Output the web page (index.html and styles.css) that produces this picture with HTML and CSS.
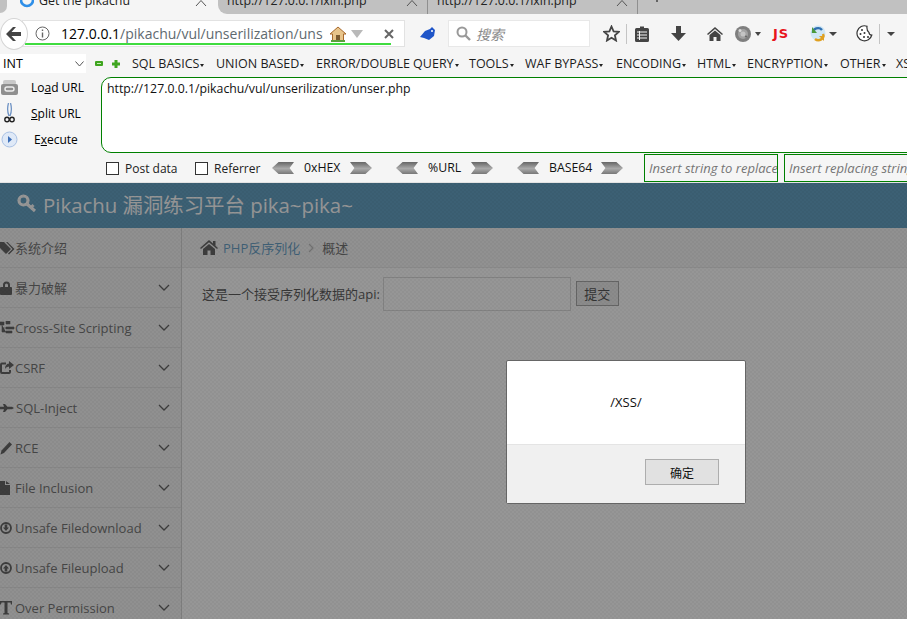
FILE: index.html
```html
<!DOCTYPE html>
<html lang="en">
<head>
    <meta charset="UTF-8">
    <title>Get the pikachu</title>
    <link rel="stylesheet" href="styles.css">
</head>
<body>
    <!-- 标签栏 -->
    <div class="tabs">
        <div class="tab tab-active">
            <svg class="spinner" width="14" height="14" viewBox="0 0 14 14"><path d="M3 1.500 A6 6 0 1 0 11 1.500" fill="none" stroke="#2f8fe8" stroke-width="2.600"/></svg>
            <span class="tab-text">Get the pikachu</span>
            <svg class="tab-close" width="12" height="8" viewBox="0 0 12 8"><path d="M1 7 L6 1.500 L11 7" fill="none" stroke="#555" stroke-width="1"/></svg>
        </div>
        <div class="tab">
            <span class="tab-text">http://127.0.0.1/lxin.php</span>
            <svg class="tab-close" width="12" height="8" viewBox="0 0 12 8"><path d="M1 7 L6 1.500 L11 7" fill="none" stroke="#555" stroke-width="1"/></svg>
        </div>
        <div class="tab">
            <span class="tab-text">http://127.0.0.1/lxin.php</span>
            <svg class="tab-close" width="12" height="8" viewBox="0 0 12 8"><path d="M1 7 L6 1.500 L11 7" fill="none" stroke="#555" stroke-width="1"/></svg>
        </div>
        <svg class="tab-plus" width="14" height="14" viewBox="0 0 14 14"><path d="M7 0 V8 M1 3.500 H13" fill="none" stroke="#444" stroke-width="1.500"/></svg>
    </div>

    <!-- 地址栏 -->
    <div class="navbar">
        <div class="back">
            <svg width="16" height="14" viewBox="0 0 16 14"><path d="M7 0 L0 7 L7 14 H10 L5.500 9 H15 V5 H5.500 L10 0 Z" fill="#444"/></svg>
        </div>
        <div class="urlbar">
            <svg class="info" width="15" height="15" viewBox="0 0 15 15"><circle cx="7.500" cy="7.500" r="6.500" fill="none" stroke="#666"/><path d="M7.500 6.500 V11.500 M7.500 3.500 V5" stroke="#666" stroke-width="1.400"/></svg>
            <div class="url-text"><span class="url-host">127.0.0.1</span>/pikachu/vul/unserilization/unser.php</div>
            <svg class="url-home" width="18" height="16" viewBox="0 0 18 16"><path d="M9 1 L1 8 H3.500 V15 H14.500 V8 H17 Z" fill="#e8c48a" stroke="#a8692c"/><rect x="7" y="9" width="4" height="6" fill="#7a5a30"/><path d="M2 15 H16" stroke="#5aa03c" stroke-width="2"/></svg>
            <svg class="url-arrow" width="12" height="8" viewBox="0 0 12 8"><path d="M0 0 H12 L6 8 Z" fill="#b9b9b9"/></svg>
            <svg class="url-stop" width="10" height="10" viewBox="0 0 10 10"><path d="M1 1 L9 9 M9 1 L1 9" stroke="#666" stroke-width="2"/></svg>
            <div class="url-progress"></div>
        </div>
        <svg class="bird" width="16" height="14" viewBox="0 0 16 14"><path d="M0 10 L5 4 L10 2 L12 0 L15 3 L14 9 L9 13 L4 11 Z" fill="#1f55c8"/><circle cx="12" cy="4" r="1" fill="#fff"/></svg>
        <div class="search">
            <svg width="15" height="15" viewBox="0 0 15 15"><circle cx="6" cy="6" r="4.500" fill="none" stroke="#999" stroke-width="2"/><path d="M9.500 9.500 L14 14" stroke="#999" stroke-width="2.400"/></svg>
            <span>搜索</span>
        </div>
        <svg class="tool tool-star" width="17" height="17" viewBox="0 0 17 17"><path d="M8.500 1.500 L10.600 6.300 L15.800 6.800 L11.900 10.300 L13 15.500 L8.500 12.800 L4 15.500 L5.100 10.300 L1.200 6.800 L6.400 6.300 Z" fill="none" stroke="#444" stroke-width="1.800"/></svg>
        <i class="tool-line"></i>
        <svg class="tool tool-clip" width="14" height="16" viewBox="0 0 14 16"><path d="M1.500 2 H5 V0.500 H9 V2 H12.500 Q14 2 14 3.500 V14.500 Q14 16 12.500 16 H1.500 Q0 16 0 14.500 V3.500 Q0 2 1.500 2 Z" fill="#444"/><path d="M2 6 H12 M2 9 H12 M2 12 H12 M4.500 5 V14" stroke="#f5f5f5" stroke-width="1"/></svg>
        <svg class="tool tool-down" width="15" height="15" viewBox="0 0 15 15"><path d="M5 0 H10 V7 H15 L7.500 15 L0 7 H5 Z" fill="#444"/></svg>
        <svg class="tool tool-home" width="16" height="14" viewBox="0 0 16 14"><path d="M8 0 L16 7 L15 8 L8 2 L1 8 L0 7 Z M2.500 8 L8 3.500 L13.500 8 V14 H9.500 V10 H6.500 V14 H2.500 Z" fill="#444"/></svg>
        <svg class="tool tool-globe" width="16" height="16" viewBox="0 0 16 16"><circle cx="8" cy="8" r="8" fill="#7f7f7f"/><circle cx="8" cy="8" r="5" fill="#a2a2a2"/><circle cx="8" cy="8" r="2.500" fill="#c4c4c4"/><circle cx="5" cy="4.500" r="1.500" fill="#dcdcdc"/><circle cx="11" cy="10.500" r="1" fill="#666"/></svg>
        <i class="caret caret-globe"></i>
        <span class="tool-js">JS</span>
        <svg class="tool tool-swap" width="16" height="18" viewBox="0 0 16 18"><circle cx="8" cy="8" r="7.500" fill="#cfe6f5"/><path d="M3 8 A5 4.500 0 0 1 12 5" fill="none" stroke="#2f6fb0" stroke-width="2.400"/><path d="M13 9 A5 4.500 0 0 1 5 14" fill="none" stroke="#e0a020" stroke-width="2.400"/><path d="M2 2 V8 H7 Z" fill="#4a9a3c"/><path d="M14 16 V11 H9 Z" fill="#e0a020"/></svg>
        <i class="caret caret-swap"></i>
        <svg class="tool tool-cookie" width="17" height="17" viewBox="0 0 17 17"><path d="M11 1.200 A7.500 7.500 0 1 0 15.800 10 Q13 10 13 7.500 Q10.500 6 11 1.200 Z" fill="#fff" stroke="#333" stroke-width="1.200"/><circle cx="6" cy="5" r="1" fill="#333"/><circle cx="4.500" cy="9" r="1" fill="#333"/><circle cx="8.500" cy="8" r="1" fill="#333"/><circle cx="8" cy="12" r="1" fill="#333"/><circle cx="12" cy="12" r="1" fill="#333"/></svg>
        <i class="tool-line tool-line2"></i>
        <i class="caret caret-last"></i>
    </div>

    <!-- hackbar -->
    <div class="hackbar">
        <div class="hack-menu">
            <div class="int-select">INT
                <svg width="9" height="6" viewBox="0 0 9 6"><path d="M0.500 0.500 L4.500 5 L8.500 0.500" fill="none" stroke="#555"/></svg>
            </div>
            <svg class="minus" width="8" height="5" viewBox="0 0 8 5"><rect width="8" height="5" rx="1" fill="#3fa51f"/><rect x="2" y="2" width="4" height="1" fill="#c8eeb8"/></svg>
            <svg class="plus" width="8" height="8" viewBox="0 0 8 8"><path d="M2.500 0 H5.500 V2.500 H8 V5.500 H5.500 V8 H2.500 V5.500 H0 V2.500 H2.500 Z" fill="#3fa51f"/></svg>
            <ul class="hack-list">
                <li class="m1">SQL BASICS</li>
                <li class="m2">UNION BASED</li>
                <li class="m3">ERROR/DOUBLE QUERY</li>
                <li class="m4">TOOLS</li>
                <li class="m5">WAF BYPASS</li>
                <li class="m6">ENCODING</li>
                <li class="m7">HTML</li>
                <li class="m8">ENCRYPTION</li>
                <li class="m9">OTHER</li>
                <li class="m10">XSS</li>
            </ul>
        </div>
        <div class="hack-main">
            <div class="hack-side">
                <div class="hack-btn">
                    <svg width="17" height="15" viewBox="0 0 17 15"><rect x="2" y="0" width="13" height="5" rx="2" fill="#c9c9c9"/><rect x="0" y="4" width="17" height="11" rx="2" fill="#8f8f8f"/><rect x="4" y="7" width="9" height="4" rx="2" fill="none" stroke="#eee" stroke-width="1.400"/></svg>
                    <span class="load">Lo<u>a</u>d URL</span>
                </div>
                <div class="hack-btn">
                    <svg width="17" height="21" viewBox="0 0 17 21"><path d="M7.500 0 Q5.500 7 8 13 M9.500 0 Q11.500 7 9 13" stroke="#6f93c4" stroke-width="1.300" fill="none"/><circle cx="6" cy="16.500" r="2.200" fill="none" stroke="#222" stroke-width="1.400"/><circle cx="11" cy="16.500" r="2.200" fill="none" stroke="#222" stroke-width="1.400"/></svg>
                    <span class="split"><u>S</u>plit URL</span>
                </div>
                <div class="hack-btn">
                    <svg width="17" height="17" viewBox="0 0 17 17"><circle cx="8.500" cy="8.500" r="7.500" fill="#dfe9f7" stroke="#a9c1e4"/><path d="M7 5 L11 8.500 L7 12 Z" fill="#3d6fb8"/></svg>
                    <span class="exec">E<u>x</u>ecute</span>
                </div>
            </div>
            <div class="hack-right">
                <textarea class="hack-url" spellcheck="false">http://127.0.0.1/pikachu/vul/unserilization/unser.php</textarea>
                <div class="hack-opts">
                    <label class="opt opt-post"><input type="checkbox">Post data</label>
                    <label class="opt opt-ref"><input type="checkbox">Referrer</label>
                    <i class="arr arr-l"></i><span class="enc enc-hex">0xHEX</span><i class="arr arr-r"></i>
                    <i class="arr arr-l arr-gap"></i><span class="enc enc-url">%URL</span><i class="arr arr-r"></i>
                    <i class="arr arr-l arr-gap"></i><span class="enc enc-b64">BASE64</span><i class="arr arr-r"></i>
                    <input class="replace replace1" placeholder="Insert string to replace">
                    <input class="replace replace2" placeholder="Insert replacing string">
                </div>
            </div>
        </div>
    </div>

    <!-- 页面 -->
    <div class="page">
        <div class="header">
            <svg width="20" height="20" viewBox="0 0 20 20"><circle cx="6.500" cy="6.500" r="4.500" fill="none" stroke="#fff" stroke-width="3.200"/><path d="M10 10 L18 17 M14 13.500 L16.500 11" stroke="#fff" stroke-width="3"/></svg>
            <span>Pikachu 漏洞练习平台 pika~pika~</span>
        </div>
        <div class="main">
            <ul class="sidebar">
                <li>
                    <svg width="15" height="14" viewBox="0 0 15 14"><path d="M-2 1 H4 L11 8 L6 13 L-2 5 Z M6 1 H7.500 L14.500 8 L9 13.500 L8 12.500 L12.500 8 Z" fill="#454545"/></svg>
                    <span>系统介绍</span>
                </li>
                <li>
                    <svg width="15" height="14" viewBox="0 0 15 14"><path d="M3 6 V4 A3.500 3.500 0 0 1 10 4 V6 H8 V4 A1.500 1.500 0 0 0 5 4 V6 Z" fill="#454545"/><rect x="0" y="6" width="12" height="8" rx="1" fill="#454545"/></svg>
                    <span>暴力破解</span><svg class="chev" width="12" height="7" viewBox="0 0 12 7"><path d="M1 1 L6 6 L11 1" fill="none" stroke="#454545" stroke-width="1.300"/></svg>
                </li>
                <li>
                    <svg width="15" height="14" viewBox="0 0 15 14"><path d="M6 0 H10 V3 H6 Z M0 1 H4 V4 H0 Z M2 4 V11 H6 M2 7 H6 M6 6 H14 V8 H6 Z M6 10 H12 V12 H6 Z" fill="#454545" stroke="#454545" stroke-width="0.600"/></svg>
                    <span>Cross-Site Scripting</span><svg class="chev" width="12" height="7" viewBox="0 0 12 7"><path d="M1 1 L6 6 L11 1" fill="none" stroke="#454545" stroke-width="1.300"/></svg>
                </li>
                <li>
                    <svg width="15" height="14" viewBox="0 0 15 14"><path d="M6 2.500 H2 Q1 2.500 1 3.500 V11 Q1 12 2 12 H9 Q10 12 10 11 V9" fill="none" stroke="#454545" stroke-width="2"/><path d="M9 0 L14 4 L9 8 V5.500 Q6 5.500 5 8 Q5 3 9 2.500 Z" fill="#454545"/></svg>
                    <span>CSRF</span><svg class="chev" width="12" height="7" viewBox="0 0 12 7"><path d="M1 1 L6 6 L11 1" fill="none" stroke="#454545" stroke-width="1.300"/></svg>
                </li>
                <li class="li-sql">
                    <svg width="14" height="14" viewBox="0 0 14 14"><path d="M0 5.800 H4 L3 3 H5 L7.500 5.800 H12 L14 7 L12 8.200 H7.500 L5 11 H3 L4 8.200 H0 Z" fill="#454545"/></svg>
                    <span>SQL-Inject</span><svg class="chev" width="12" height="7" viewBox="0 0 12 7"><path d="M1 1 L6 6 L11 1" fill="none" stroke="#454545" stroke-width="1.300"/></svg>
                </li>
                <li>
                    <svg width="15" height="14" viewBox="0 0 15 14"><path d="M9.500 1 L12 3.500 L4 12 L0.500 13.500 L1.500 9.500 Z" fill="#454545"/></svg>
                    <span>RCE</span><svg class="chev" width="12" height="7" viewBox="0 0 12 7"><path d="M1 1 L6 6 L11 1" fill="none" stroke="#454545" stroke-width="1.300"/></svg>
                </li>
                <li>
                    <svg width="15" height="14" viewBox="0 0 15 14"><path d="M0 0 H5 V4 H10 V14 H0 Z M6 0 L10 3 H6 Z" fill="#454545"/></svg>
                    <span>File Inclusion</span><svg class="chev" width="12" height="7" viewBox="0 0 12 7"><path d="M1 1 L6 6 L11 1" fill="none" stroke="#454545" stroke-width="1.300"/></svg>
                </li>
                <li>
                    <svg width="15" height="14" viewBox="0 0 15 14"><circle cx="6" cy="7" r="5" fill="none" stroke="#454545" stroke-width="1.800"/><path d="M4.700 3.500 H7.300 V6.500 H9 L6 10 L3 6.500 H4.700 Z" fill="#454545"/></svg>
                    <span>Unsafe Filedownload</span><svg class="chev" width="12" height="7" viewBox="0 0 12 7"><path d="M1 1 L6 6 L11 1" fill="none" stroke="#454545" stroke-width="1.300"/></svg>
                </li>
                <li>
                    <svg width="15" height="14" viewBox="0 0 15 14"><circle cx="6" cy="7" r="5" fill="none" stroke="#454545" stroke-width="1.800"/><path d="M4.700 10.500 H7.300 V7.500 H9 L6 4 L3 7.500 H4.700 Z" fill="#454545"/></svg>
                    <span>Unsafe Fileupload</span><svg class="chev" width="12" height="7" viewBox="0 0 12 7"><path d="M1 1 L6 6 L11 1" fill="none" stroke="#454545" stroke-width="1.300"/></svg>
                </li>
                <li>
                    <svg width="15" height="14" viewBox="0 0 15 14"><path d="M0 0 H12 V3.500 H11 L10.500 1.500 H7.500 V12 L9 12.500 V13.500 H3 V12.500 L4.500 12 V1.500 H1.500 L1 3.500 H0 Z" fill="#454545"/></svg>
                    <span>Over Permission</span><svg class="chev" width="12" height="7" viewBox="0 0 12 7"><path d="M1 1 L6 6 L11 1" fill="none" stroke="#454545" stroke-width="1.300"/></svg>
                </li>
            </ul>
            <div class="content">
                <div class="crumb">
                    <svg width="18" height="15" viewBox="0 0 18 15"><path d="M9 0 L13 3.500 V1 H15.500 V5.700 L18 8 L17 9 L9 2.300 L1 9 L0 8 Z M3 9 L9 4 L15 9 V15 H10.500 V10.500 H7.500 V15 H3 Z" fill="#454545"/></svg>
                    <a href="javascript:;">PHP反序列化</a>
                    <svg class="crumb-sep" width="6" height="10" viewBox="0 0 6 10"><path d="M1 1 L5 5 L1 9" fill="none" stroke="#b0b0b0" stroke-width="1.200"/></svg>
                    <span>概述</span>
                </div>
                <form class="api-form" onsubmit="return false">
                    <label>这是一个接受序列化数据的api:</label>
                    <input class="api-input" type="text">
                    <button class="api-btn">提交</button>
                </form>
            </div>
        </div>
    </div>

    <!-- 遮罩和弹窗 -->
    <div class="mask"></div>
    <div class="dialog">
        <div class="dialog-body">/XSS/</div>
        <div class="dialog-foot"><button class="dialog-ok">确定</button></div>
    </div>
</body>
</html>
```
FILE: styles.css
```css
*{
    padding: 0;
    margin: 0;
    box-sizing: border-box;
}
ul,li{
    list-style: none;
}
html,body{
    height: 619px;
    overflow: hidden;
}
body{
    font-family: "Open Sans", "Noto Sans CJK SC", sans-serif;
    font-size: 12px;
    color: #000;
    background: #f5f5f5;
    position: relative;
}
svg{
    flex: none;
    display: block;
}

/* 标签栏 */
.tabs{
    height: 14px;
    background: linear-gradient(to right, #f5f5f5 230px, #c1c1c1 230px);
    display: flex;
    overflow: hidden;
}
.tab{
    width: 210px;
    height: 14px;
    display: flex;
    align-items: center;
    padding-left: 9px;
    flex: none;
    background: #c1c1c1;
    border-right: 1px solid #8f8f8f;
}
.tab:nth-child(2){
    border-radius: 0 0 0 9px;
}
.tab-active{
    width: 218px;
    padding-left: 20px;
    background: #f5f5f5;
    border-right: 0;
    position: relative;
}
.tab-active::before{
    content: "";
    position: absolute;
    left: 0;
    top: 0;
    width: 7px;
    height: 13px;
    background: #c1c1c1;
    border-radius: 0 0 7px 0;
}
.spinner{
    margin: -12px 5px 0 0;
}
.tab-text{
    font-size: 12.400px;
    line-height: 14px;
    margin-top: -13px;
    white-space: nowrap;
    color: #222;
}
.tab-close{
    margin-left: auto;
    margin-right: 9px;
    margin-top: -8px;
}
.tab-active .tab-close{
    margin-right: 11px;
}
.tab-plus{
    margin-left: 12px;
    margin-top: -6px;
}

/* 地址栏 */
.navbar{
    height: 39px;
    display: flex;
    align-items: center;
    position: relative;
}
.back{
    width: 28px;
    height: 32px;
    border-radius: 50%;
    background: #fff;
    border: 1px solid #d5d5d5;
    display: flex;
    align-items: center;
    justify-content: center;
    position: relative;
    z-index: 2;
    flex: none;
}
.urlbar{
    width: 383px;
    height: 27px;
    margin-left: -6px;
    background: #fff;
    border: 1px solid #e2e2e2;
    display: flex;
    align-items: center;
    position: relative;
    flex: none;
}
.info{
    margin-left: 12px;
    flex: none;
}
.url-text{
    width: 262px;
    margin-left: 11px;
    font-size: 14px;
    white-space: nowrap;
    overflow: hidden;
    color: #5f6a70;
    flex: none;
}
.url-host{
    color: #000;
}
.url-home{
    margin-left: 6px;
}
.url-arrow{
    margin-left: 4px;
}
.url-stop{
    margin-left: 21px;
}
.url-progress{
    position: absolute;
    left: 2px;
    top: 22px;
    width: 366px;
    height: 2px;
    background: #3fdc3f;
}
.bird{
    margin-left: 15px;
}
.search{
    width: 142px;
    height: 27px;
    margin-left: 12px;
    background: #fff;
    border: 1px solid #e8e8e8;
    display: flex;
    align-items: center;
    padding-left: 7px;
    gap: 5px;
    font-size: 14px;
    font-style: italic;
    color: #8a8a8a;
    flex: none;
}
.tool-star{
    margin-left: 13px;
}
.tool-line{
    width: 1px;
    height: 20px;
    background: #c4c4c4;
    margin-left: 6px;
    flex: none;
}
.tool-clip{
    margin-left: 8px;
}
.tool-down{
    margin-left: 22px;
}
.tool-home{
    margin-left: 21px;
}
.tool-globe{
    margin-left: 12px;
}
.caret{
    width: 0;
    height: 0;
    border-left: 3px solid transparent;
    border-right: 3px solid transparent;
    border-top: 4px solid #444;
    flex: none;
}
.caret-globe{
    margin-left: 4px;
}
.tool-js{
    margin-left: 12px;
    width: 18px;
    font-family: "DejaVu Sans", sans-serif;
    font-weight: bold;
    font-size: 13px;
    letter-spacing: 1px;
    color: #e8141c;
    flex: none;
}
.tool-swap{
    margin-left: 19px;
}
.caret-swap{
    margin-left: 3px;
    border-left-width: 4px;
    border-right-width: 4px;
}
.tool-cookie{
    margin-left: 19px;
}
.tool-line2{
    margin-left: 6px;
}
.caret-last{
    margin-left: 7px;
    border-left-width: 4px;
    border-right-width: 4px;
}

/* hackbar */
.hackbar{
    height: 130px;
    border-bottom: 1px solid #e3e3e3;
    overflow: hidden;
}
.hack-menu{
    height: 21px;
    margin-bottom: 3px;
    display: flex;
    align-items: center;
}
.int-select{
    width: 86px;
    height: 19px;
    background: #fff;
    padding-left: 3px;
    font-size: 12.500px;
    line-height: 19px;
    display: flex;
    align-items: center;
    justify-content: space-between;
    padding-right: 2px;
    flex: none;
}
.minus{
    margin-left: 9px;
}
.plus{
    margin-left: 9px;
}
.hack-list{
    display: flex;
    margin-left: 12px;
    font-size: 12.500px;
    white-space: nowrap;
    color: #1c1c1c;
}
.hack-list li{
    flex: none;
}
.hack-list li::after{
    content: "";
    display: inline-block;
    border-left: 2px solid transparent;
    border-right: 2px solid transparent;
    border-top: 3px solid #222;
    margin-left: 1px;
    vertical-align: 1px;
}
.m1{ width: 84px; }
.m2{ width: 100px; }
.m3{ width: 153px; }
.m4{ width: 56px; }
.m5{ width: 91px; }
.m6{ width: 81px; }
.m7{ width: 50px; }
.m8{ width: 93px; }
.m9{ width: 56px; }
.hack-main{
    display: flex;
}
.hack-side{
    width: 101px;
    flex: none;
}
.hack-btn{
    height: 26px;
    display: flex;
    align-items: center;
    padding-left: 1px;
}
.hack-btn:nth-child(1){
    margin-top: -3px;
}
.hack-btn span{
    white-space: nowrap;
}
.load{
    margin-left: 13px;
}
.split{
    margin-left: 13px;
}
.exec{
    margin-left: 16px;
}
.hack-right{
    width: 900px;
    flex: none;
}
.hack-url{
    display: block;
    width: 900px;
    height: 76px;
    resize: none;
    border: 1px solid #008000;
    border-radius: 10px 0 0 10px;
    outline: 0;
    padding: 3px 5px;
    font-family: "Open Sans", sans-serif;
    font-size: 12.300px;
    line-height: 16px;
    overflow: hidden;
    color: #111;
}
.hack-opts{
    display: flex;
    align-items: center;
    height: 28px;
    margin-top: 1px;
    white-space: nowrap;
}
.opt{
    display: flex;
    align-items: center;
    font-size: 12px;
    color: #222;
}
.opt input{
    appearance: none;
    width: 13px;
    height: 13px;
    background: #fff;
    border: 1px solid #333;
    margin-right: 6px;
}
.opt-post{
    margin-left: 5px;
    width: 89px;
}
.opt-ref{
    width: 77px;
}
.arr{
    display: block;
    width: 22px;
    height: 12px;
    background: linear-gradient(#666, #aaa 55%, #777);
    flex: none;
}
.arr-l{
    clip-path: polygon(0 50%, 30% 0, 100% 0, 80% 50%, 100% 100%, 30% 100%);
}
.arr-r{
    clip-path: polygon(0 0, 70% 0, 100% 50%, 70% 100%, 0 100%, 20% 50%);
}
.arr-gap{
    margin-left: 24px;
}
.enc{
    font-size: 12.300px;
    margin-top: -2px;
    color: #111;
}
.enc-hex{
    width: 56px;
    padding-left: 10px;
}
.enc-url{
    width: 53px;
    padding-left: 10px;
}
.enc-b64{
    width: 62px;
    padding-left: 10px;
}
.replace{
    height: 28px;
    border: 1px solid #008000;
    outline: 0;
    font-family: "Open Sans", sans-serif;
    font-size: 13px;
    font-style: italic;
    padding-left: 4px;
    background: #f5f5f5;
    flex: none;
}
.replace::placeholder{
    color: #757575;
    opacity: 1;
}
.replace1{
    width: 134px;
    margin-left: 21px;
}
.replace2{
    width: 140px;
    margin-left: 6px;
}

/* 页面 */
.page{
    height: 436px;
    background: #f2f2f2;
}
.header{
    height: 45px;
    background: #438eb9;
    display: flex;
    align-items: center;
    padding: 0 0 3px 17px;
    gap: 6px;
    color: #fff;
    font-size: 20.400px;
    white-space: nowrap;
}
.main{
    display: flex;
}
.sidebar{
    width: 182px;
    flex: none;
    border-right: 1px solid #ccc;
    height: 392px;
    overflow: hidden;
}
.sidebar li{
    height: 40px;
    display: flex;
    align-items: center;
    border-bottom: 1px solid #e0e0e0;
    font-size: 13px;
    color: #585858;
    white-space: nowrap;
}
.li-sql span{
    margin-left: 2px;
}
.chev{
    margin-left: auto;
    margin-right: 11px;
}
.content{
    flex: 1;
    background: #fff;
    height: 392px;
}
.crumb{
    height: 40px;
    background: #f5f5f5;
    border-bottom: 1px solid #e5e5e5;
    display: flex;
    align-items: center;
    padding-left: 18px;
    font-size: 13px;
    color: #555;
}
.crumb a{
    color: #4c8fbd;
    text-decoration: none;
    margin-left: 5px;
}
.crumb-sep{
    margin: 0 8px;
}
.api-form{
    display: flex;
    align-items: center;
    padding: 9px 0 0 20px;
    font-size: 13px;
    color: #393939;
}
.api-form label{
    margin-bottom: 2px;
}
.api-input{
    width: 188px;
    height: 34px;
    margin-left: 3px;
    border: 1px solid #d5d5d5;
    background: #fff;
}
.api-btn{
    width: 43px;
    height: 25px;
    margin: 0 0 2px 5px;
    border: 1px solid #999;
    background: #e8e8e8;
    font-family: "Noto Sans CJK SC", sans-serif;
    font-size: 13px;
    color: #333;
}

/* 遮罩 */
.mask{
    position: absolute;
    left: 0;
    right: 0;
    top: 183px;
    bottom: 0;
    background-color: rgba(54, 54, 54, 0.52);
    background-image: repeating-conic-gradient(rgba(0, 0, 0, 0.03) 0 25%, transparent 0 50%);
    background-size: 4px 4px;
}
.dialog{
    position: absolute;
    left: 506px;
    top: 360px;
    width: 240px;
    height: 144px;
    background: #fff;
    border: 1px solid #666;
    border-radius: 2px;
    display: flex;
    flex-direction: column;
}
.dialog-body{
    height: 83px;
    padding-bottom: 2px;
    display: flex;
    align-items: center;
    justify-content: center;
    font-size: 13px;
    color: #111;
}
.dialog-foot{
    flex: 1;
    background: #f0f0f0;
    border-top: 1px solid #e4e4e4;
    display: flex;
    justify-content: flex-end;
    align-items: flex-start;
    padding: 14px 26px 0 0;
}
.dialog-ok{
    width: 74px;
    height: 26px;
    background: #e1e1e1;
    border: 1px solid #adadad;
    font-family: "Noto Sans CJK SC", sans-serif;
    font-size: 12px;
    color: #111;
}
```
